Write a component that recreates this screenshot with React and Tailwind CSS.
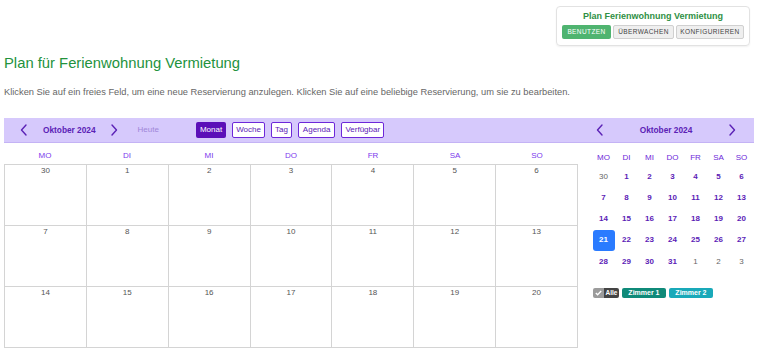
import React from 'react';

const weeks = [
  [30, 1, 2, 3, 4, 5, 6],
  [7, 8, 9, 10, 11, 12, 13],
  [14, 15, 16, 17, 18, 19, 20],
];

const miniWeeks = [
  [30, 1, 2, 3, 4, 5, 6],
  [7, 8, 9, 10, 11, 12, 13],
  [14, 15, 16, 17, 18, 19, 20],
  [21, 22, 23, 24, 25, 26, 27],
  [28, 29, 30, 31, 1, 2, 3],
];

const dayNames = ['MO', 'DI', 'MI', 'DO', 'FR', 'SA', 'SO'];

function Chevron({ dir }) {
  return (
    <svg width="8" height="12" viewBox="0 0 8 12" fill="none" stroke="#5b21b6" strokeWidth="1.4" strokeLinecap="round" strokeLinejoin="round">
      {dir === 'left' ? <path d="M6 1 L1.5 6 L6 11" /> : <path d="M2 1 L6.5 6 L2 11" />}
    </svg>
  );
}

export default function App() {
  return (
    <div className="w-[760px] h-[348px] overflow-hidden bg-white text-[#333]" style={{ fontFamily: '"Liberation Sans", Arial, sans-serif' }}>
      {/* Top-right card */}
      <div className="flex justify-end pt-[6px] pr-[10px]">
        <div className="w-[194px] h-[40px] border border-[#e2e2e2] rounded-[4px] shadow-[0_1px_2px_rgba(0,0,0,0.06)] flex flex-col items-center pt-[4px]">
          <div className="text-[9px] font-bold text-[#2f8f45] leading-[11px]">Plan Ferienwohnung Vermietung</div>
          <div className="flex gap-[2px] mt-[3px]">
            <span className="h-[14px] w-[49px] flex items-center justify-center rounded-[2px] bg-[#4fb470] text-white text-[6.5px] tracking-[0.4px]">BENUTZEN</span>
            <span className="h-[14px] w-[61px] flex items-center justify-center rounded-[2px] bg-[#efefef] border border-[#d0d0d0] text-[#444] text-[6.5px] tracking-[0.4px]">ÜBERWACHEN</span>
            <span className="h-[14px] w-[68px] flex items-center justify-center rounded-[2px] bg-[#efefef] border border-[#d0d0d0] text-[#444] text-[6.5px] tracking-[0.4px]">KONFIGURIEREN</span>
          </div>
        </div>
      </div>

      {/* Title + description */}
      <h1 className="ml-[4px] mt-[7px] text-[14.8px] leading-[20px] text-[#23923d]">Plan für Ferienwohnung Vermietung</h1>
      <p className="ml-[4px] mt-[13px] text-[9.3px] leading-[12px] text-[#666]">
        Klicken Sie auf ein freies Feld, um eine neue Reservierung anzulegen. Klicken Sie auf eine beliebige Reservierung, um sie zu bearbeiten.
      </p>

      {/* Toolbar */}
      <div className="mx-[4px] mt-[20px] w-[750px] h-[25px] bg-[#d6c9fc] border-b border-[#c4b3f5] flex items-center">
        <div className="w-[574px] flex items-center">
          <span className="ml-[16px]"><Chevron dir="left" /></span>
          <span className="ml-[15px] text-[8.3px] font-bold text-[#5b21b6]">Oktober 2024</span>
          <span className="ml-[14px]"><Chevron dir="right" /></span>
          <span className="ml-[20px] text-[8px] text-[#9f86d8]">Heute</span>
          <div className="ml-[37px] flex gap-[6px]">
            <span className="h-[16px] px-[4px] flex items-center rounded-[2px] bg-[#5b0fb8] text-white text-[8px]">Monat</span>
            <span className="h-[16px] px-[3px] flex items-center rounded-[2px] bg-white border border-[#6d28d9] text-[#5b21b6] text-[8px]">Woche</span>
            <span className="h-[16px] px-[3px] flex items-center rounded-[2px] bg-white border border-[#6d28d9] text-[#5b21b6] text-[8px]">Tag</span>
            <span className="h-[16px] px-[4px] flex items-center rounded-[2px] bg-white border border-[#6d28d9] text-[#5b21b6] text-[8px]">Agenda</span>
            <span className="h-[16px] px-[3px] flex items-center rounded-[2px] bg-white border border-[#6d28d9] text-[#5b21b6] text-[8px]">Verfügbar</span>
          </div>
        </div>
        <div className="flex-1 flex items-center justify-between pl-[18px] pr-[18px]">
          <Chevron dir="left" />
          <span className="text-[8.3px] font-bold text-[#5b21b6]">Oktober 2024</span>
          <Chevron dir="right" />
        </div>
      </div>

      <div className="flex ml-[4px]">
        {/* Month grid */}
        <div className="w-[574px]">
          <div className="grid grid-cols-7 h-[21px] items-center">
            {dayNames.map((d) => (
              <div key={d} className="text-center text-[8px] text-[#7c3aed] pt-[5px]">{d}</div>
            ))}
          </div>
          <div className="border-l border-t border-[#d4d4d4]">
            {weeks.map((w, i) => (
              <div key={i} className="grid grid-cols-7 h-[61px]">
                {w.map((d) => (
                  <div key={d} className="border-r border-b border-[#d4d4d4] text-center text-[8px] leading-[11px] text-[#555] pt-0">{d}</div>
                ))}
              </div>
            ))}
          </div>
        </div>

        {/* Mini calendar */}
        <div className="ml-[14px] w-[161px]">
          <div className="grid grid-cols-7 h-[20px] items-end">
            {dayNames.map((d) => (
              <div key={d} className="text-center text-[8px] text-[#6d28d9] leading-[10px]">{d}</div>
            ))}
          </div>
          <div className="mt-[3px]">
            {miniWeeks.map((w, i) => (
              <div key={i} className="grid grid-cols-7 h-[21.25px]">
                {w.map((d, j) => {
                  const outside = (i === 0 && d > 7) || (i === 4 && d < 7);
                  const today = i === 3 && d === 21;
                  return (
                    <div key={j} className="flex items-center justify-center">
                      {today ? (
                        <span className="w-[22px] h-[21px] rounded-[3px] bg-[#2a7bff] text-white font-bold text-[8px] flex items-center justify-center">{d}</span>
                      ) : (
                        <span className={outside ? 'text-[8px] text-[#666]' : 'text-[8px] font-bold text-[#5b21b6]'}>{d}</span>
                      )}
                    </div>
                  );
                })}
              </div>
            ))}
          </div>
          <div className="flex gap-[3px] mt-[16px] ml-[1px]">
            <span className="flex h-[10px] rounded-[2px] overflow-hidden text-[6.5px] font-bold text-white">
              <span className="w-[11px] bg-[#9b9b9b] flex items-center justify-center">
                <svg width="7" height="6" viewBox="0 0 7 6" fill="none" stroke="white" strokeWidth="1.3"><path d="M0.8 3 L2.6 4.8 L6.2 1" /></svg>
              </span>
              <span className="px-[1.5px] bg-[#444] flex items-center">Alle</span>
            </span>
            <span className="h-[10px] w-[44px] rounded-[2px] bg-[#0f8a79] text-white text-[7px] font-bold flex items-center justify-center">Zimmer 1</span>
            <span className="h-[10px] w-[44px] rounded-[2px] bg-[#19a9b9] text-white text-[7px] font-bold flex items-center justify-center">Zimmer 2</span>
          </div>
        </div>
      </div>
    </div>
  );
}
